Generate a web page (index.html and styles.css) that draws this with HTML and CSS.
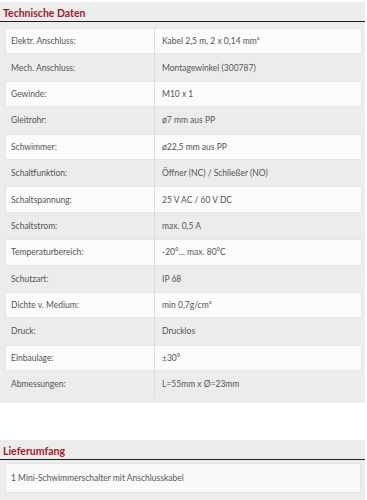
FILE: index.html
```html
<!DOCTYPE html>
<html lang="de">
<head>
<meta charset="utf-8">
<link rel="stylesheet" href="styles.css">
</head>
<body>
<section class="box">
  <h2 class="title">Technische Daten</h2>
  <div class="table">
    <div class="row"><div class="k">Elektr. Anschluss:</div><div class="v">Kabel 2,5 m, 2 x 0,14 mm²</div></div>
    <div class="row"><div class="k">Mech. Anschluss:</div><div class="v">Montagewinkel (300787)</div></div>
    <div class="row"><div class="k">Gewinde:</div><div class="v">M10 x 1</div></div>
    <div class="row"><div class="k">Gleitrohr:</div><div class="v">ø7 mm aus PP</div></div>
    <div class="row"><div class="k">Schwimmer:</div><div class="v">ø22,5 mm aus PP</div></div>
    <div class="row"><div class="k">Schaltfunktion:</div><div class="v">Öffner (NC) / Schließer (NO)</div></div>
    <div class="row"><div class="k">Schaltspannung:</div><div class="v">25 V AC / 60 V DC</div></div>
    <div class="row"><div class="k">Schaltstrom:</div><div class="v">max. 0,5 A</div></div>
    <div class="row"><div class="k">Temperaturbereich:</div><div class="v">-20°… max. 80°C</div></div>
    <div class="row"><div class="k">Schutzart:</div><div class="v">IP 68</div></div>
    <div class="row"><div class="k">Dichte v. Medium:</div><div class="v">min 0,7g/cm³</div></div>
    <div class="row"><div class="k">Druck:</div><div class="v">Drucklos</div></div>
    <div class="row"><div class="k">Einbaulage:</div><div class="v">±30°</div></div>
    <div class="row"><div class="k">Abmessungen:</div><div class="v">L=55mm x Ø=23mm</div></div>
  </div>
</section>
<section class="box box2">
  <h2 class="title">Lieferumfang</h2>
  <div class="single">1 Mini-Schwimmerschalter mit Anschlusskabel</div>
</section>
</body>
</html>
```
FILE: styles.css
```css
html, body {
  margin: 0;
  padding: 0;
  background: #ffffff;
}
body {
  font-family: Lato, "Open Sans", sans-serif;
  color: #555;
  width: 367px;
  padding-top: 2px;
}
.box {
  background: #ececec;
  width: 365px;
  padding-bottom: 6px;
}
.box2 {
  margin-top: 37px;
  padding-bottom: 10px;
}
.title {
  margin: 0;
  height: 19px;
  line-height: 22px;
  padding-left: 3px;
  font-size: 10.5px;
  font-weight: 700;
  color: #a3182c;
  border-bottom: 1.5px solid #1e1e1e;
}
.table {
  margin: 6px 3px 0 5px;
}
.row {
  display: grid;
  grid-template-columns: 150px 1fr;
  height: 26.4px;
  align-items: stretch;
  font-size: 8.5px;
}
.row:nth-child(odd) {
  background: #fbfbfb;
  box-shadow: inset 0 0 0 1px #e6e6e6;
}
.k, .v {
  display: flex;
  align-items: center;
}
.k {
  padding-left: 6px;
  border-right: 1px solid #dcdcdc;
}
.v {
  padding-left: 7px;
}
.single {
  margin: 3px 4px 0 5px;
  height: 30px;
  display: flex;
  align-items: center;
  padding-left: 6px;
  font-size: 8.5px;
  background: #f9f9f9;
  box-shadow: inset 0 0 0 1px #e4e4e4;
}
```
